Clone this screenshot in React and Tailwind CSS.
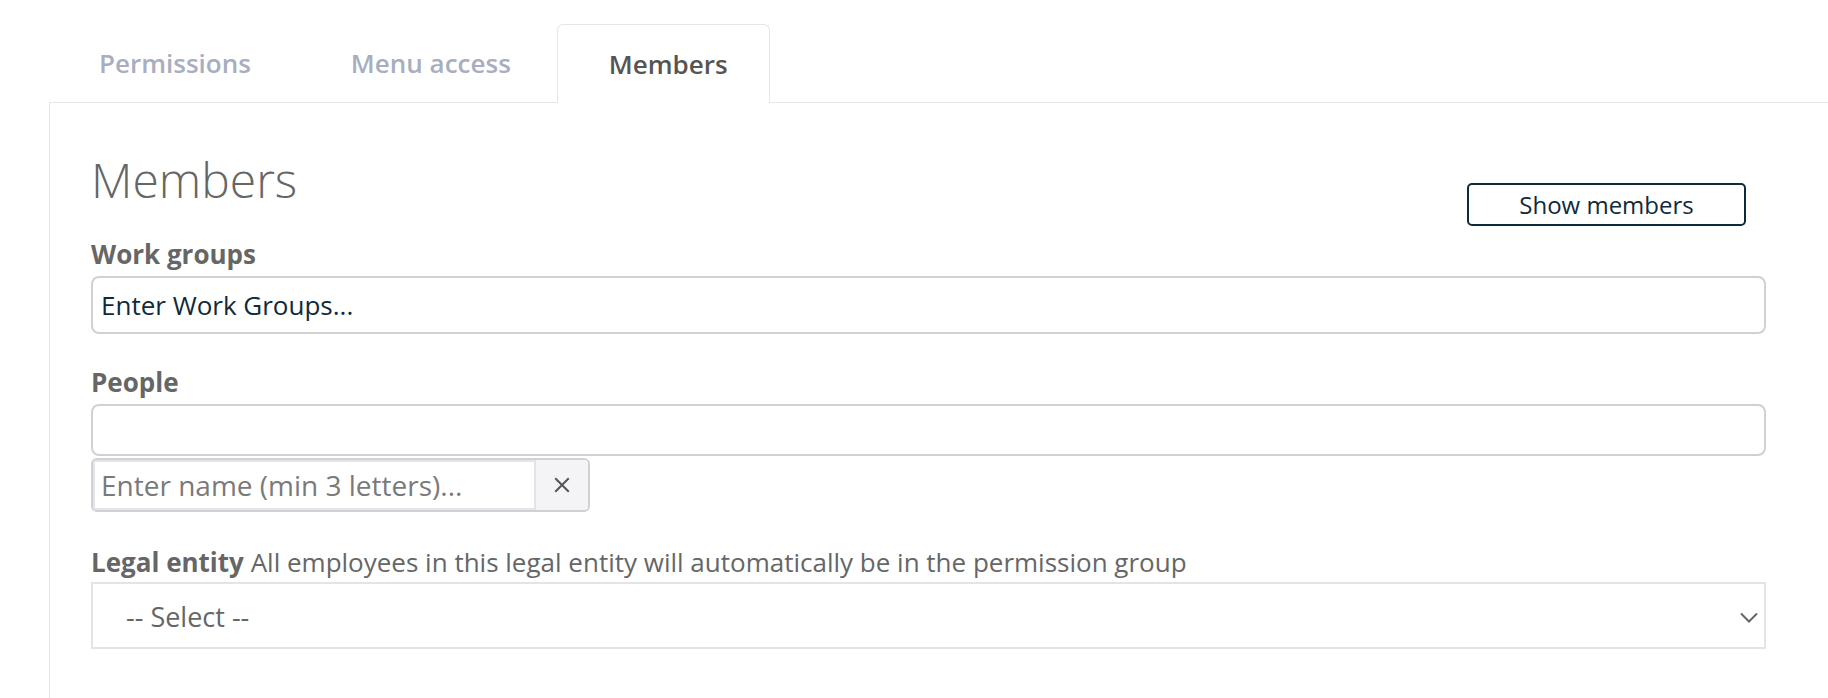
import React from "react";

export default function App() {
  return (
    <div className="w-[1828px] h-[698px] overflow-hidden bg-white font-['Open_Sans',sans-serif]">
      <div className="pl-[49px] pt-[24px]">
        {/* Tabs */}
        <div className="flex h-[79px] items-stretch border-b border-[#e6e6e6]">
          <div className="flex items-center px-[50px] text-[26px] font-semibold text-[#a8aebf]">Permissions</div>
          <div className="flex items-center pl-[50px] pr-[46px] text-[26px] font-semibold text-[#a8aebf]">Menu access</div>
          <div className="-mb-px flex items-center rounded-t-[6px] border border-b-0 border-[#e6e6e6] bg-white pl-[51px] pr-[41px] text-[26px] font-semibold text-[#555555]">Members</div>
        </div>
        {/* Panel */}
        <div className="h-[600px] border-l border-[#e6e6e6] pl-[41px] pr-[62px]">
          <div className="flex items-start justify-between pt-[49px]">
            <h1 className="text-[48px] font-light leading-[56px] text-[#666666]">Members</h1>
            <button className="mt-[31px] mr-[20px] h-[43px] w-[279px] rounded-[5px] border-2 border-[#0e2a3b] text-[24px] leading-none text-[#0e2a3b]">Show members</button>
          </div>
          <div className="mt-[10px] text-[26px] font-bold leading-[36px] text-[#666666]">Work groups</div>
          <div className="mt-[4px] flex h-[58px] items-center rounded-[8px] border-2 border-[#d0d0d5] px-[8px] text-[26px] text-[#0e2a3b]">Enter Work Groups...</div>
          <div className="mt-[30px] text-[26px] font-bold leading-[36px] text-[#666666]">People</div>
          <div className="mt-[4px] h-[52px] rounded-[8px] border-2 border-[#d0d0d5]"></div>
          <div className="mt-[2px] flex h-[54px] w-[499px] overflow-hidden rounded-[6px] border-2 border-[#d0d0d5]">
            <div className="flex flex-1 items-center overflow-hidden whitespace-nowrap border-2 border-[#e4e4e8] px-[6px] text-[28px] text-[#7a7a7a]">Enter name (min 3 letters)...</div>
            <div className="flex w-[52px] items-center justify-center bg-[#f4f4f6] text-[#555555]">
              <svg width="18" height="18" viewBox="0 0 16 16" fill="none" stroke="currentColor" strokeWidth="1.8">
                <path d="M2 2 L14 14 M14 2 L2 14" />
              </svg>
            </div>
          </div>
          <div className="mt-[32px] whitespace-nowrap text-[26px] leading-[36px] text-[#666666]">
            <span className="font-bold">Legal entity</span> All employees in this legal entity will automatically be in the permission group
          </div>
          <div className="mt-[2px] flex h-[67px] items-center justify-between border-2 border-[#e4e4e4] pl-[33px] pr-[6px] pt-[4px] text-[27px] text-[#666666]">
            <span>-- Select --</span>
            <svg width="18" height="11" viewBox="0 0 18 11" fill="none" stroke="#666666" strokeWidth="2">
              <path d="M1 1.5 L9 9.5 L17 1.5" />
            </svg>
          </div>
        </div>
      </div>
    </div>
  );
}
